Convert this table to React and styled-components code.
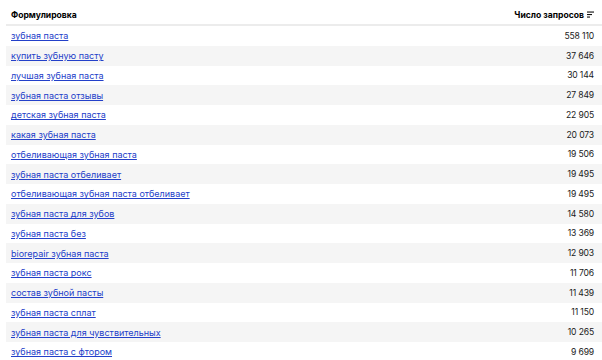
import React from "react";
import styled, { createGlobalStyle } from "styled-components";

const Global = createGlobalStyle`
  html, body { margin: 0; padding: 0; background: #fff; overflow: hidden; }
  body { font-family: Inter, "Noto Sans", "Liberation Sans", sans-serif; }
`;

const Page = styled.div`
  padding-left: 6px;
  width: 602px;
  box-sizing: border-box;
`;

const Table = styled.div`
  display: flex;
  flex-direction: column;
  width: 596px;
`;

const HeaderRow = styled.div`
  display: flex;
  justify-content: space-between;
  align-items: center;
  height: 26px;
  box-sizing: border-box;
  padding: 5px 8px 0 5px;
  border-bottom: 2px solid #ececec;
  font-size: 8.6px;
  font-weight: 700;
  color: #000;
`;

const HeadCell = styled.div`
  display: flex;
  align-items: center;
  gap: 3px;
`;

const Row = styled.div`
  display: flex;
  justify-content: space-between;
  align-items: center;
  height: 19.75px;
  flex-shrink: 0;
  padding: 0 8px 0 5px;
  background: ${(p) => (p.$shaded ? "#f5f5f5" : "#fff")};
  font-size: 9px;
`;

const Link = styled.a`
  color: #2340c9;
  text-decoration: underline;
  text-underline-offset: 1px;
  text-decoration-thickness: 0.7px;
`;

const Count = styled.span`
  color: #1a1a1a;
  font-size: 8.6px;
  letter-spacing: -0.15px;
`;

const SortIcon = () => (
  <svg width="7" height="7" viewBox="0 0 7 7">
    <rect x="0" y="0.5" width="7" height="1.1" fill="#111" />
    <rect x="0" y="3" width="5" height="1.1" fill="#111" />
    <rect x="0" y="5.5" width="3" height="1.1" fill="#111" />
  </svg>
);

const rows = [
  ["зубная паста", "558 110"],
  ["купить зубную пасту", "37 646"],
  ["лучшая зубная паста", "30 144"],
  ["зубная паста отзывы", "27 849"],
  ["детская зубная паста", "22 905"],
  ["какая зубная паста", "20 073"],
  ["отбеливающая зубная паста", "19 506"],
  ["зубная паста отбеливает", "19 495"],
  ["отбеливающая зубная паста отбеливает", "19 495"],
  ["зубная паста для зубов", "14 580"],
  ["зубная паста без", "13 369"],
  ["biorepair зубная паста", "12 903"],
  ["зубная паста рокс", "11 706"],
  ["состав зубной пасты", "11 439"],
  ["зубная паста сплат", "11 150"],
  ["зубная паста для чувствительных", "10 265"],
  ["зубная паста с фтором", "9 699"],
];

export default function App() {
  return (
    <Page>
      <Global />
      <Table>
        <HeaderRow>
          <HeadCell>Формулировка</HeadCell>
          <HeadCell>
            Число запросов <SortIcon />
          </HeadCell>
        </HeaderRow>
        {rows.map(([q, n], i) => (
          <Row key={q + i} $shaded={i % 2 === 1}>
            <Link href="#">{q}</Link>
            <Count>{n}</Count>
          </Row>
        ))}
        <Row $shaded />
      </Table>
    </Page>
  );
}
